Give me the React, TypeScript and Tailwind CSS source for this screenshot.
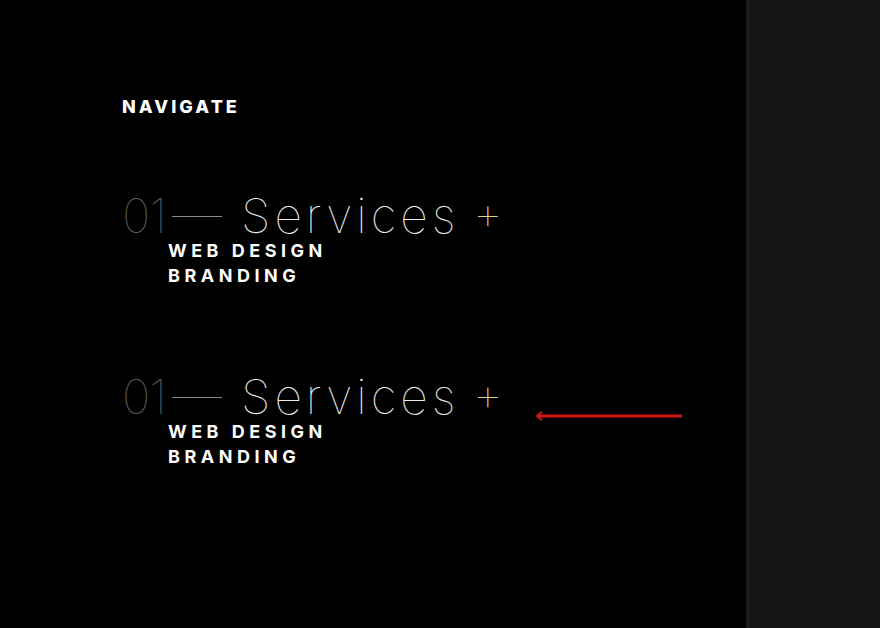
const display = { fontFamily: "Inter, 'Noto Sans', sans-serif" };

function ServiceBlock({ arrow }: { arrow?: boolean }) {
  return (
    <div className="relative">
      <div className="flex items-baseline text-[48px] leading-[44px] font-thin" style={display}>
        <span className="text-[#5c5c5c] tracking-[-1px]">01</span>
        <span className="ml-[6px] mr-[19px] h-px w-[50px] self-center bg-[#8a8a8a]" />
        <span className="text-[#ececec] tracking-[4px]">Services</span>
        <span className="ml-[13px] -translate-y-[3px] text-[#d6d98a]">+</span>
      </div>
      <ul className="pl-[46px] text-[18px] font-bold uppercase leading-[25px] tracking-[0.25em] text-white" style={display}>
        <li>Web Design</li>
        <li>Branding</li>
      </ul>
      {arrow && (
        <svg className="absolute left-[412px] top-[35px]" width="150" height="12" viewBox="0 0 150 12">
          <path d="M148 6H4" stroke="#d21414" strokeWidth="3" />
          <path d="M8 2L3 6L8 10" fill="none" stroke="#d21414" strokeWidth="2" />
        </svg>
      )}
    </div>
  );
}

export default function App() {
  return (
    <div className="flex h-[628px] w-[880px] overflow-hidden bg-black">
      <div className="w-[746px] pl-[122px] pt-[97px]">
        <h2 className="text-[18px] font-extrabold uppercase leading-[20px] tracking-[0.17em] text-white" style={display}>
          Navigate
        </h2>
        <div className="mt-[77px] flex flex-col gap-[87px]">
          <ServiceBlock />
          <ServiceBlock arrow />
        </div>
      </div>
      <div className="flex-1 border-l-4 border-[#1b1b1b] bg-[#141414]" />
    </div>
  );
}
